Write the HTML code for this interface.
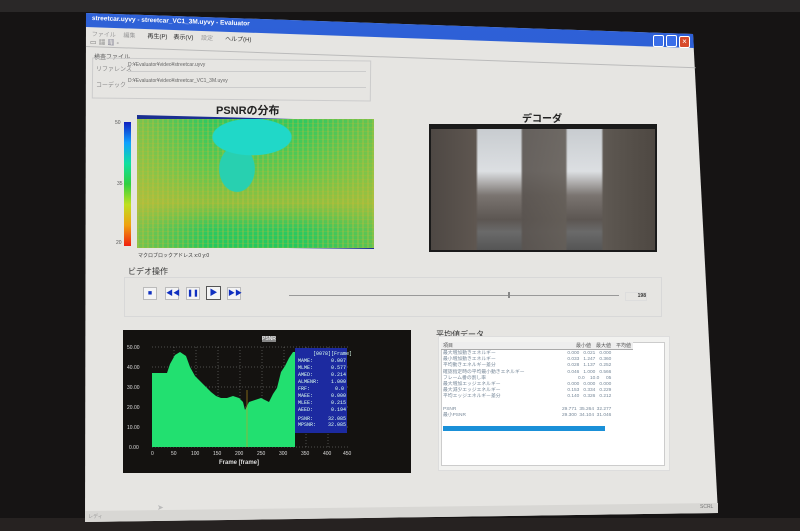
<!DOCTYPE html>
<html><head><meta charset="utf-8"><style>
body{margin:0;width:800px;height:531px;background:#161414;overflow:hidden;position:relative;font-family:"Liberation Sans","Noto Sans CJK JP",sans-serif}
.a{position:absolute}
.t{font-size:6px;color:#555;white-space:nowrap}
</style></head><body>
<div class="a" style="left:0;top:0;width:800px;height:12px;background:#2a2828"></div>
<div class="a" style="left:0;top:518px;width:800px;height:13px;background:#262221"></div>
<div class="a" style="left:0;top:0;width:800px;height:531px;background:#e6e5e2;clip-path:polygon(86px 13px,693px 34px,718px 513px,85px 522px)"></div>
<div class="a" style="left:0;top:0;width:800px;height:531px;background:linear-gradient(#2f62d8,#1b49c4);clip-path:polygon(86px 13px,693px 34px,694px 48px,86px 27px)"></div>
<div class="a" style="left:92px;top:15px;font-size:6.5px;color:#fff;font-weight:bold;transform:rotate(2deg);transform-origin:0 0">streetcar.uyvy - streetcar_VC1_3M.uyvy - Evaluator</div>
<div class="a" style="left:653px;top:35px;width:9px;height:10px;background:#3a6ee8;border:1px solid #fff;border-radius:2px"></div>
<div class="a" style="left:666px;top:35px;width:9px;height:10px;background:#3a6ee8;border:1px solid #fff;border-radius:2px"></div>
<div class="a" style="left:679px;top:36px;width:9px;height:10px;background:#d84a2a;border:1px solid #fff;border-radius:2px;color:#fff;font-size:8px;line-height:10px;text-align:center">×</div>
<div class="a t" style="left:92px;top:29px;transform:rotate(2deg);transform-origin:0 0;font-size:6px;color:#999">ファイル　 編集　　<span style="color:#222">再生(P)　表示(V)</span>　 設定　　<span style="color:#333">ヘルプ(H)</span></div>
<div class="a" style="left:90px;top:38px;width:40px;height:9px;font-size:7px;color:#777;transform:rotate(2deg)">▭ ▦ <span style="color:#335">▥</span> ◦</div>
<div class="a" style="left:86px;top:46px;border-top:1px solid #bbb;width:610px;transform:rotate(2deg);transform-origin:0 0"></div>
<div class="a t" style="left:94px;top:52px">検査ファイル</div>
<div class="a" style="left:92px;top:59px;width:277px;height:39px;border:1px solid #ccc;transform:rotate(0.6deg)"></div>
<div class="a t" style="left:96px;top:64px;color:#888">リファレンス</div>
<div class="a" style="left:128px;top:62px;width:238px;height:9px;border-bottom:1px solid #ccc;font-size:5px;color:#666">D:¥Evaluator¥video¥streetcar.uyvy</div>
<div class="a t" style="left:96px;top:80px;color:#888">コーデック</div>
<div class="a" style="left:128px;top:78px;width:238px;height:9px;border-bottom:1px solid #ccc;font-size:5px;color:#666">D:¥Evaluator¥video¥streetcar_VC1_3M.uyvy</div>
<div class="a" style="left:216px;top:102px;font-size:11px;font-weight:bold;color:#222">PSNRの分布</div>
<div class="a" style="left:124px;top:122px;width:7px;height:124px;background:linear-gradient(#1020c0,#10a0ff,#10e0a0,#30d040,#c0e020,#f0a010,#f02010)"></div>
<div class="a t" style="left:115px;top:120px;font-size:5px">50</div>
<div class="a t" style="left:117px;top:181px;font-size:5px">35</div>
<div class="a t" style="left:116px;top:240px;font-size:5px">20</div>
<div class="a" style="left:137px;top:115px;width:237px;height:134px;background:#1a2f90;clip-path:polygon(0 0,100% 6px,100% 100%,0 98%)"></div>
<div class="a" style="left:137px;top:119px;width:237px;height:129px;background:
radial-gradient(ellipse 65px 30px at 115px 18px,#20d8c8 60%,transparent 62%),
radial-gradient(ellipse 35px 45px at 100px 50px,#28d0b0 50%,transparent 52%),
repeating-linear-gradient(90deg,rgba(210,190,60,.25) 0 2px,transparent 2px 5px),
repeating-linear-gradient(0deg,rgba(200,180,40,.2) 0 1px,transparent 1px 4px),
linear-gradient(90deg,rgba(200,190,60,.5) 0,transparent 30%,transparent 70%,rgba(180,190,60,.4)),
linear-gradient(#30c860,#60c850 40%,#90c040 65%,#30c860 85%,#22c860)"></div>
<div class="a t" style="left:138px;top:252px;font-size:5px;color:#333">マクロブロックアドレス x:0 y:0</div>
<div class="a" style="left:522px;top:110px;font-size:10px;font-weight:bold;color:#222">デコーダ</div>
<div class="a" style="left:429px;top:124px;width:228px;height:128px;background:#1a1a1a"></div>
<div class="a" style="left:431px;top:129px;width:224px;height:121px;background:
linear-gradient(90deg,#4e4844 0,#5e5650 20%,transparent 21%,transparent 40%,rgba(90,84,80,.9) 41%,rgba(100,94,88,.9) 60%,transparent 61%,transparent 76%,#5e5852 77%,#4e4842 100%),
linear-gradient(#c8ccd0 0,#dcdfe2 35%,#7a7470 55%,#5c5652 75%,#6a6a6a 85%,#555 100%)"></div>
<div class="a" style="left:128px;top:266px;font-size:8px;color:#333">ビデオ操作</div>
<div class="a" style="left:124px;top:277px;width:536px;height:38px;border:1px solid #d8d8d8"></div>
<div class="a" style="left:143px;top:287px;width:12px;height:11px;background:#f4f4f4;border:1px solid #bbb;color:#1030c0;font-size:7px;text-align:center;line-height:11px">■</div>
<div class="a" style="left:165px;top:287px;width:12px;height:11px;background:#f4f4f4;border:1px solid #bbb;color:#1030c0;font-size:7px;text-align:center;line-height:11px">◀◀</div>
<div class="a" style="left:186px;top:287px;width:12px;height:11px;background:#f4f4f4;border:1px solid #bbb;color:#1030c0;font-size:7px;text-align:center;line-height:11px">❚❚</div>
<div class="a" style="left:206px;top:286px;width:13px;height:12px;background:#f4f4f4;border:1px solid #555;color:#1030c0;font-size:8px;text-align:center;line-height:12px">▶</div>
<div class="a" style="left:227px;top:287px;width:12px;height:11px;background:#f4f4f4;border:1px solid #bbb;color:#1030c0;font-size:7px;text-align:center;line-height:11px">▶▶</div>
<div class="a" style="left:289px;top:295px;width:330px;height:1px;background:#999"></div>
<div class="a" style="left:508px;top:292px;width:2px;height:6px;background:#888"></div>
<div class="a" style="left:625px;top:292px;width:20px;height:7px;border:1px solid #ddd;font-size:5px;font-weight:bold;color:#333;text-align:right">198</div>
<div class="a" style="left:123px;top:330px;width:288px;height:143px;background:#141210"></div>
<div class="a" style="left:262px;top:336px;font-size:5px;color:#fff;background:#888">PSNR</div>
<svg class="a" style="left:123px;top:330px" width="288" height="143">
<g stroke="#888" stroke-dasharray="1,2" stroke-width="0.5">
<line x1="29" y1="17" x2="225" y2="17"/><line x1="29" y1="37" x2="225" y2="37"/><line x1="29" y1="57" x2="225" y2="57"/><line x1="29" y1="77" x2="225" y2="77"/><line x1="29" y1="97" x2="225" y2="97"/><line x1="29" y1="117" x2="225" y2="117"/>
<line x1="51" y1="17" x2="51" y2="117"/><line x1="73" y1="17" x2="73" y2="117"/><line x1="95" y1="17" x2="95" y2="117"/><line x1="117" y1="17" x2="117" y2="117"/><line x1="139" y1="17" x2="139" y2="117"/><line x1="161" y1="17" x2="161" y2="117"/><line x1="183" y1="17" x2="183" y2="117"/><line x1="205" y1="17" x2="205" y2="117"/>
</g>
<polygon fill="#22e070" points="29,117 29,43 44,43 47,34 52,25 57,22 63,26 67,37 72,46 78,52 84,58 88,62 93,66 98,68 104,68 110,66 116,68 120,72 122,80 126,72 132,70 138,68 142,70 146,72 150,64 154,58 158,42 162,36 166,28 170,22 172,22 172,117"/>
<line x1="124" y1="60" x2="124" y2="117" stroke="#c8a020" stroke-width="0.6"/>
<g font-size="5" fill="#ddd" font-family="Liberation Sans">
<text x="4" y="19">50.00</text><text x="4" y="39">40.00</text><text x="4" y="59">30.00</text><text x="4" y="79">20.00</text><text x="4" y="99">10.00</text><text x="6" y="119">0.00</text>
<text x="28" y="125">0</text><text x="48" y="125">50</text><text x="68" y="125">100</text><text x="90" y="125">150</text><text x="112" y="125">200</text><text x="134" y="125">250</text><text x="156" y="125">300</text><text x="178" y="125">350</text><text x="200" y="125">400</text><text x="220" y="125">450</text>
<text x="96" y="134" font-weight="bold" font-size="6">Frame [frame]</text>
</g>
<rect x="172" y="18" width="52" height="85" fill="#1c2aa0"/>
<g font-size="5" fill="#dfe" font-family="Liberation Mono">
<text x="190" y="25">[0078][Frame]</text>
<text x="175" y="32">MAME:</text><text x="208" y="32">0.007</text>
<text x="175" y="39">MLME:</text><text x="208" y="39">0.577</text>
<text x="175" y="46">AMED:</text><text x="208" y="46">0.214</text>
<text x="175" y="53">ALMENR:</text><text x="208" y="53">1.000</text>
<text x="175" y="60">FRF:</text><text x="212" y="60">0.0</text>
<text x="175" y="67">MAEE:</text><text x="208" y="67">0.000</text>
<text x="175" y="74">MLEE:</text><text x="208" y="74">0.215</text>
<text x="175" y="81">AEED:</text><text x="208" y="81">0.194</text>
<text x="175" y="90">PSNR:</text><text x="205" y="90">32.085</text>
<text x="175" y="96">MPSNR:</text><text x="205" y="96">32.085</text>
</g>
</svg>
<div class="a" style="left:436px;top:329px;font-size:8px;color:#333">平均値データ</div>
<div class="a" style="left:438px;top:336px;width:230px;height:133px;border:1px solid #ddd;background:#f2f2f0"></div>
<div class="a" style="left:441px;top:342px;width:222px;height:122px;background:#fff;border:1px solid #ccc"></div>
<div class="a" style="left:441px;top:342px;width:192px;height:7px;background:#eee;border-bottom:1px solid #aaa;font-size:5px;color:#555">
<span class="a" style="left:2px">項目</span><span class="a" style="left:135px">最小値</span><span class="a" style="left:155px">最大値</span><span class="a" style="left:175px">平均値</span></div>
<div class="a" style="left:443px;top:351px;font-size:4.8px;line-height:6.2px;color:#789;white-space:pre">最大増加動きエネルギー
最小増加動きエネルギー
平均動きエネルギー差分
確認指定時の平均最小動きエネルギー
フレーム番の割し率
最大増加エッジエネルギー
最大減少エッジエネルギー
平均エッジエネルギー差分

PSNR
最小PSNR</div>
<div class="a" style="left:562px;top:351px;font-size:4.8px;line-height:6.2px;color:#789;white-space:pre;text-align:right">0.000   0.021   0.000
0.033   1.247   0.360
0.028   1.137   0.252
0.046   1.000   0.566
  0.0    10.0     05
0.000   0.000   0.000
0.153   0.334   0.229
0.140   0.326   0.212

29.771  35.264  32.277
29.300  34.104  31.046</div>
<div class="a" style="left:443px;top:426px;width:162px;height:5px;background:#1a90d8"></div>
<div class="a" style="left:0;top:0;width:800px;height:531px;background:#d8d7d4;clip-path:polygon(85px 511px,718px 503px,718px 513px,85px 522px)"></div>
<div class="a" style="left:88px;top:513px;font-size:5px;color:#999">レディ</div>
<div class="a" style="left:700px;top:504px;font-size:5px;color:#777">SCRL</div>
<div class="a" style="left:157px;top:503px;font-size:8px;color:#bbb">➤</div>
</body></html>
